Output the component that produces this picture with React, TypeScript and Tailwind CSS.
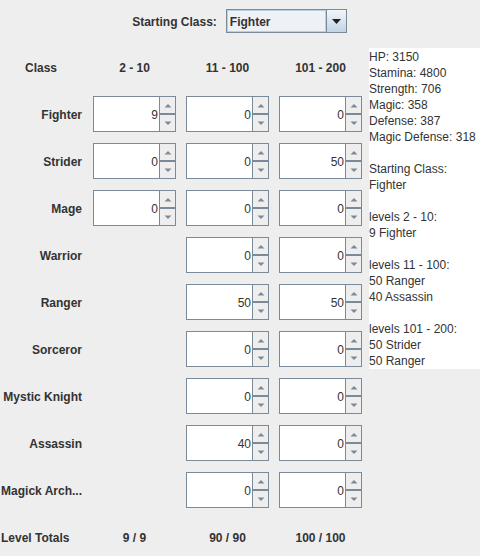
import React from 'react'

const columns = ['2 - 10', '11 - 100', '101 - 200']

// null = no spinner in that column
const rows: { name: string; values: (number | null)[] }[] = [
  { name: 'Fighter', values: [9, 0, 0] },
  { name: 'Strider', values: [0, 0, 50] },
  { name: 'Mage', values: [0, 0, 0] },
  { name: 'Warrior', values: [null, 0, 0] },
  { name: 'Ranger', values: [null, 50, 50] },
  { name: 'Sorceror', values: [null, 0, 0] },
  { name: 'Mystic Knight', values: [null, 0, 0] },
  { name: 'Assassin', values: [null, 40, 0] },
  { name: 'Magick Arch...', values: [null, 0, 0] },
]

const totals = ['9 / 9', '90 / 90', '100 / 100']

const summary = [
  'HP: 3150',
  'Stamina: 4800',
  'Strength: 706',
  'Magic: 358',
  'Defense: 387',
  'Magic Defense: 318',
  '',
  'Starting Class:',
  'Fighter',
  '',
  'levels 2 - 10:',
  '9 Fighter',
  '',
  'levels 11 - 100:',
  '50 Ranger',
  '40 Assassin',
  '',
  'levels 101 - 200:',
  '50 Strider',
  '50 Ranger',
]

function Arrow({ up }: { up?: boolean }) {
  return (
    <svg width="8" height="5" viewBox="0 0 8 5" className="block">
      <path d={up ? 'M0.5 4.5 L4 1 L7.5 4.5 Z' : 'M0.5 0.5 L7.5 0.5 L4 4 Z'} fill="#7a8a99" />
    </svg>
  )
}

function Spinner({ value }: { value: number }) {
  return (
    <div className="flex h-[36px] w-[83px] border border-[#7a8a99] bg-white">
      <div className="flex flex-1 items-center justify-end pt-[2px] pr-[1px] text-[12px] text-[#333333]">
        {value}
      </div>
      <div className="flex w-[16px] flex-col border-l border-[#7a8a99] bg-[#eeeeee]">
        <div className="flex flex-1 items-center justify-center">
          <Arrow up />
        </div>
        <div className="h-[2px] bg-[#7a8a99]" />
        <div className="flex flex-1 items-center justify-center">
          <Arrow />
        </div>
      </div>
    </div>
  )
}

export default function App() {
  return (
    <div
      className="h-[556px] w-[480px] overflow-hidden bg-[#eeeeee] text-[#333333]"
      style={{ fontFamily: '"Liberation Sans", Arial, sans-serif' }}
    >
      <div className="flex h-[48px] items-start justify-center gap-[9px] pt-[9px] pr-[1px]">
        <span className="flex h-[24px] items-center pt-[1px] text-[12px] font-bold">Starting Class:</span>
        <div className="flex h-[24px] w-[121px] border border-[#7a8a99] bg-[#eef1f5]">
          <div className="flex flex-1 items-center border border-[#b8cfe5] pt-[1px] pl-[2px] text-[12px] font-bold">
            Fighter
          </div>
          <div className="flex w-[20px] items-center justify-center border-l border-[#7a8a99] bg-gradient-to-b from-[#f2f6fa] to-[#c2d3e4]">
            <svg width="9" height="5" viewBox="0 0 9 5">
              <path d="M0 0 L9 0 L4.5 5 Z" fill="#222222" />
            </svg>
          </div>
        </div>
      </div>

      <div className="flex items-start">
        <div className="w-[369px] text-[12px]">
          <div className="grid h-[38px] grid-cols-[83px_83px_83px_83px] items-center gap-x-[10px] pt-[2px] font-bold">
            <span className="pl-[25px]">Class</span>
            {columns.map((c) => (
              <span key={c} className="text-center">
                {c}
              </span>
            ))}
          </div>

          <div className="mt-[10px] flex flex-col gap-[11px]">
            {rows.map((row) => (
              <div key={row.name} className="grid h-[36px] grid-cols-[83px_83px_83px_83px] items-center gap-x-[10px]">
                <span className="pt-[2px] pr-[1px] text-right font-bold whitespace-nowrap">{row.name}</span>
                {row.values.map((v, i) =>
                  v === null ? <div key={i} /> : <Spinner key={i} value={v} />
                )}
              </div>
            ))}
          </div>

          <div className="mt-[10px] grid h-[38px] grid-cols-[83px_83px_83px_83px] items-center gap-x-[10px] pt-[2px] font-bold">
            <span className="pl-[1px] whitespace-nowrap">Level Totals</span>
            {totals.map((t) => (
              <span key={t} className="text-center">
                {t}
              </span>
            ))}
          </div>
        </div>

        <div className="w-[111px] bg-white pt-[1px] text-[12px] leading-[16px] whitespace-nowrap">
          {summary.map((line, i) => (
            <div key={i} className="h-[16px]">
              {line}
            </div>
          ))}
        </div>
      </div>
    </div>
  )
}
